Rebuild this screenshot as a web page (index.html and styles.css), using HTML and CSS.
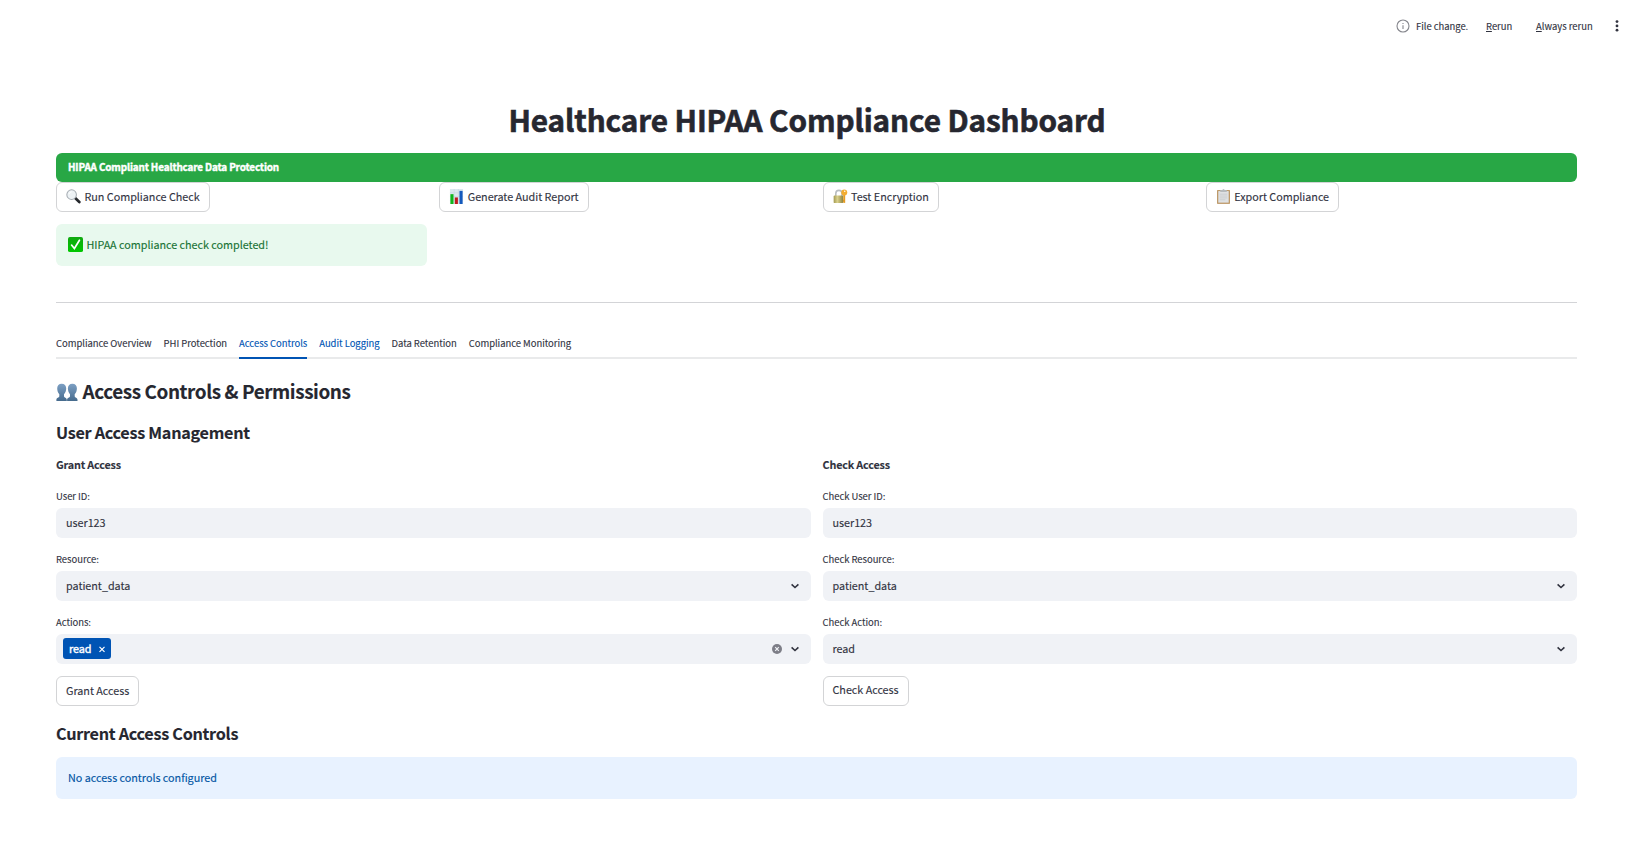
FILE: index.html
```html
<!DOCTYPE html>
<html lang="en">
<head>
<meta charset="utf-8">
<title>Healthcare HIPAA Compliance Dashboard</title>
<link rel="stylesheet" href="styles.css">
</head>
<body>
<svg width="0" height="0" class="defs">
  <defs>
    <linearGradient id="green" x1="0" y1="0" x2="0" y2="1"><stop offset="0" stop-color="#10a810"/><stop offset="1" stop-color="#00c800"/></linearGradient>
    <linearGradient id="people" x1="0" y1="0" x2="0" y2="1"><stop offset="0" stop-color="#7da0c4"/><stop offset="1" stop-color="#466b8d"/></linearGradient>
    <linearGradient id="brass" x1="0" y1="0" x2="1" y2="0"><stop offset="0" stop-color="#a39a50"/><stop offset=".4" stop-color="#d9d08c"/><stop offset="1" stop-color="#8f8540"/></linearGradient>
    <symbol id="chevron" viewBox="0 0 12 12"><path d="M2.6 4.3 6 7.5l3.4-3.2" fill="none" stroke="#31333f" stroke-width="1.6"/></symbol>
  </defs>
</svg>
<header class="toolbar">
  <svg class="info" viewBox="0 0 14 14"><circle cx="7" cy="7" r="6" fill="none" stroke="#85868d" stroke-width="1.1"/><path d="M7 6.2v3.7M7 4v1.1" stroke="#85868d" stroke-width="1.1"/></svg>
  <span class="t-file">File change.</span>
  <span class="t-rerun"><u>R</u>erun</span>
  <span class="t-always"><u>A</u>lways rerun</span>
  <svg class="dots" viewBox="0 0 4 14"><g fill="#31333f"><circle cx="2" cy="2.6" r="1.4"/><circle cx="2" cy="6.9" r="1.4"/><circle cx="2" cy="11.2" r="1.4"/></g></svg>
</header>
<main class="page">
  <h1><span>Healthcare HIPAA Compliance Dashboard</span></h1>
  <div class="banner">HIPAA Compliant Healthcare Data Protection</div>
  <section class="actions">
    <div>
      <button class="btn"><svg class="emoji" viewBox="0 0 16 16"><path d="m9.800 9.600 4.400 4.200" stroke="#25282c" stroke-width="2.900" stroke-linecap="round"/><circle cx="6" cy="6" r="5.100" fill="#edf2f5" stroke="#a3aab0" stroke-width="1.100"/><path d="M3.200 5.300A3.200 3.200 0 0 1 6 3" stroke="#fff" fill="none"/></svg>Run Compliance Check</button>
      <div class="alert success"><svg class="emoji" viewBox="0 0 16 16"><rect x="0" y="0" width="16" height="16" rx="2" fill="url(#green)"/><path d="m3.800 8.600 3 3.600 5.400-8.800" stroke="#fff" stroke-width="1.800" fill="none" stroke-linecap="round"/></svg>HIPAA compliance check completed!</div>
    </div>
    <div><button class="btn"><svg class="emoji" viewBox="0 0 16 16"><path fill="#dce8ee" d="M1 0h14v16H1z"/><path d="M1 4h14M1 8h14M1 12h14M5.500 0v16M10 0v16" stroke="#c2d2dc" stroke-width=".5"/><path fill="#11b51c" d="M1.500 5.500h3.300V16H1.500z"/><path fill="#c01b20" d="M6.200 9h3.300v7H6.200z"/><path fill="#1459bd" d="M11.200 2h3.300v14h-3.300z"/></svg>Generate Audit Report</button></div>
    <div><button class="btn"><svg class="emoji" viewBox="0 0 16 16"><path d="M3 8V4.800a3.300 3.300 0 0 1 6.600 0V8" stroke="#b8bdc1" stroke-width="1.700" fill="none"/><rect x="10.900" y="5" width="2.100" height="9.800" fill="#e59b21"/><path d="M9.400 11.500h2v2h-2z" fill="#d88b18"/><circle cx="12" cy="3.800" r="3.200" fill="#f2ad32"/><circle cx="12.500" cy="2.400" r=".8" fill="#fff"/><rect x=".7" y="7" width="10" height="8" rx="1" fill="url(#brass)"/></svg>Test Encryption</button></div>
    <div><button class="btn"><svg class="emoji" viewBox="0 0 16 16"><path fill="#b58c55" d="M1.200 1.200h13.600v14.600H1.200z"/><path fill="#dfe1e3" d="M2.400 2.200h11.200v12.400H2.400z"/><path d="M4 5.500h8M4 7.500h8M4 9.500h8M4 11.500h6" stroke="#c6c9cc" stroke-width=".8"/><path fill="#b6babd" d="M4.500 1.100h2L8 0l1.500 1.100h2v2h-7z"/></svg>Export Compliance</button></div>
  </section>
  <hr>
  <nav class="tabs">
    <span>Compliance Overview</span><span>PHI Protection</span><span class="active">Access Controls</span><span class="hover">Audit Logging</span><span>Data Retention</span><span>Compliance Monitoring</span>
  </nav>
  <h2><svg class="people" viewBox="0 0 22 18"><g fill="url(#people)"><path id="person" d="M5.700.7c2.800 0 4.500 1.700 4.500 4.600 0 2.500-.8 4.700-2.200 6v1.900c0 1.300 2.800 1.500 2.800 3.500V18H.4v-1.300c0-2 2.900-2.200 2.900-3.500v-1.900c-1.300-1.300-2.100-3.500-2.100-6C1.200 2.400 2.900.7 5.700.7z"/><use href="#person" x="10.700"/></g></svg><span>Access Controls &amp; Permissions</span></h2>
  <h3 class="h-user"><span>User Access Management</span></h3>
  <section class="forms">
    <div class="form">
      <p class="form-title">Grant Access</p>
      <label>User ID:</label>
      <div class="field">user123</div>
      <label>Resource:</label>
      <div class="field"><span class="wide">patient_data</span><svg class="chev"><use href="#chevron"/></svg></div>
      <label>Actions:</label>
      <div class="field multi"><span class="chip">read<svg viewBox="0 0 8 8"><path d="m1.500 1.800 5 5M6.500 1.800l-5 5" stroke="#fff" stroke-width="1.200"/></svg></span><svg class="clear" viewBox="0 0 10 10"><circle cx="5" cy="5" r="5" fill="#7d7e87"/><path d="m3.200 3.200 3.600 3.600M6.800 3.200 3.200 6.800" stroke="#f0f2f6" stroke-width="1.200"/></svg><svg class="chev"><use href="#chevron"/></svg></div>
      <button class="btn b-grant">Grant Access</button>
    </div>
    <div class="form">
      <p class="form-title">Check Access</p>
      <label>Check User ID:</label>
      <div class="field">user123</div>
      <label>Check Resource:</label>
      <div class="field"><span class="wide">patient_data</span><svg class="chev"><use href="#chevron"/></svg></div>
      <label>Check Action:</label>
      <div class="field"><span class="wide">read</span><svg class="chev"><use href="#chevron"/></svg></div>
      <button class="btn b-check">Check Access</button>
    </div>
  </section>
  <h3 class="h-current"><span>Current Access Controls</span></h3>
  <div class="alert note">No access controls configured</div>
</main>
</body>
</html>
```
FILE: styles.css
```css
* { box-sizing: border-box; }
body {
  margin: 0;
  background: #fff;
  color: #31333f;
  font-family: "Noto Sans CJK SC", "Noto Sans", sans-serif;
  font-size: 10.8px;
  line-height: 18px;
  letter-spacing: -.03px;
  -webkit-text-stroke: .12px currentColor;
  overflow: hidden;
}
h1, h2, h3, p { margin: 0; }
svg { display: block; flex: none; }
.defs { position: absolute; }
.toolbar {
  display: flex;
  align-items: center;
  height: 45px;
  padding: 7px 18px 0 1396px;
  font-size: 9.46px;
  white-space: nowrap;
}
.toolbar u { text-underline-offset: 1px; }
.info { width: 14px; height: 14px; margin-right: 6px; margin-top: -1px; }
.t-file { width: 70px; }
.t-rerun { width: 50px; }
.t-always { width: 79px; letter-spacing: 0; }
.dots { width: 4px; height: 14px; margin-top: -1px; }
.page { padding: 0 62px 0 56px; }
h1 {
  height: 108px;
  padding: 55px 19px 0 0;
  font-size: 29.7px;
  line-height: 40px;
  font-weight: 700;
  letter-spacing: -.1px;
  text-align: center;
  color: #262730;
  -webkit-text-stroke-width: .6px;
}
.banner {
  height: 29px;
  padding-left: 12px;
  border-radius: 6px;
  background: #28a745;
  color: #fff;
  font-size: 9.9px;
  font-weight: 700;
  letter-spacing: -.125px;
  line-height: 28px;
  -webkit-text-stroke-width: .4px;
}
.actions { display: grid; grid-template-columns: repeat(4, 1fr); column-gap: 12px; }
.btn {
  display: flex;
  align-items: center;
  height: 30px;
  padding: 0 9px 2px;
  border: 1px solid #d3d4d6;
  border-radius: 6px;
  background: #fff;
  color: #31333f;
  font: inherit;
  letter-spacing: inherit;
  white-space: nowrap;
}
.b-grant { padding-bottom: 2px; }
.b-check { padding-bottom: 4px; }
.emoji { width: 15px; height: 15px; margin-right: 3.500px; }
.alert {
  display: flex;
  align-items: center;
  height: 42px;
  padding: 0 12px 2px;
  border-radius: 6px;
}
.success { margin-top: 12px; background: #e8f9ee; color: #177233; }
.note { background: #e8f2ff; color: #0054a3; }
hr { height: 1px; margin: 36px 0 0; border: 0; background: #d3d4d7; }
.tabs {
  display: flex;
  gap: 12px;
  height: 30px;
  margin-top: 26px;
  font-size: 9.46px;
  line-height: 28px;
  box-shadow: inset 0 -2px #e9eaeb;
  white-space: nowrap;
}
.active, .hover { color: #0054b4; }
.active { box-shadow: inset 0 -2px #0054b4; }
h2, h3 { display: flex; align-items: center; font-weight: 700; white-space: nowrap; color: #262730; }
h2 { height: 28px; margin-top: 18px; font-size: 18.9px; line-height: 28px; letter-spacing: -.41px; }
.people { width: 22px; height: 18px; margin: 2px 4.500px 0 0; }
h3 { height: 24px; font-size: 16.2px; line-height: 24px; letter-spacing: -.28px; }
.h-user { margin-top: 15px; }
.forms { display: grid; grid-template-columns: 1fr 1fr; column-gap: 12px; margin-top: 11px; }
.form-title { height: 18px; margin-bottom: 15px; font-weight: 700; letter-spacing: -.18px; }
label { display: block; height: 16px; margin-bottom: 4px; font-size: 9.46px; line-height: 16px; }
.field {
  display: flex;
  align-items: center;
  height: 30px;
  margin-bottom: 13px;
  padding: 0 10px 2px;
  border-radius: 6px;
  background: #f0f2f6;
}
.wide { flex: 1; }
.chev { width: 12px; height: 12px; margin-top: 2px; }
.multi { padding-left: 7px; }
.chip {
  display: flex;
  align-items: center;
  justify-content: space-between;
  width: 48px;
  height: 21px;
  margin: 1px auto 0 0;
  padding: 0 5px 1px 6px;
  border-radius: 3px;
  background: #0054b4;
  color: #fff;
  line-height: 17px;
  -webkit-text-stroke-width: .4px;
}
.chip svg { width: 8px; height: 8px; margin-top: 1px; }
.clear { width: 10px; height: 10px; margin: 2px 7px 0 0; }
.field + .btn { margin-top: -1px; }
.h-current { margin-top: 15px; margin-bottom: 12px; }
```
